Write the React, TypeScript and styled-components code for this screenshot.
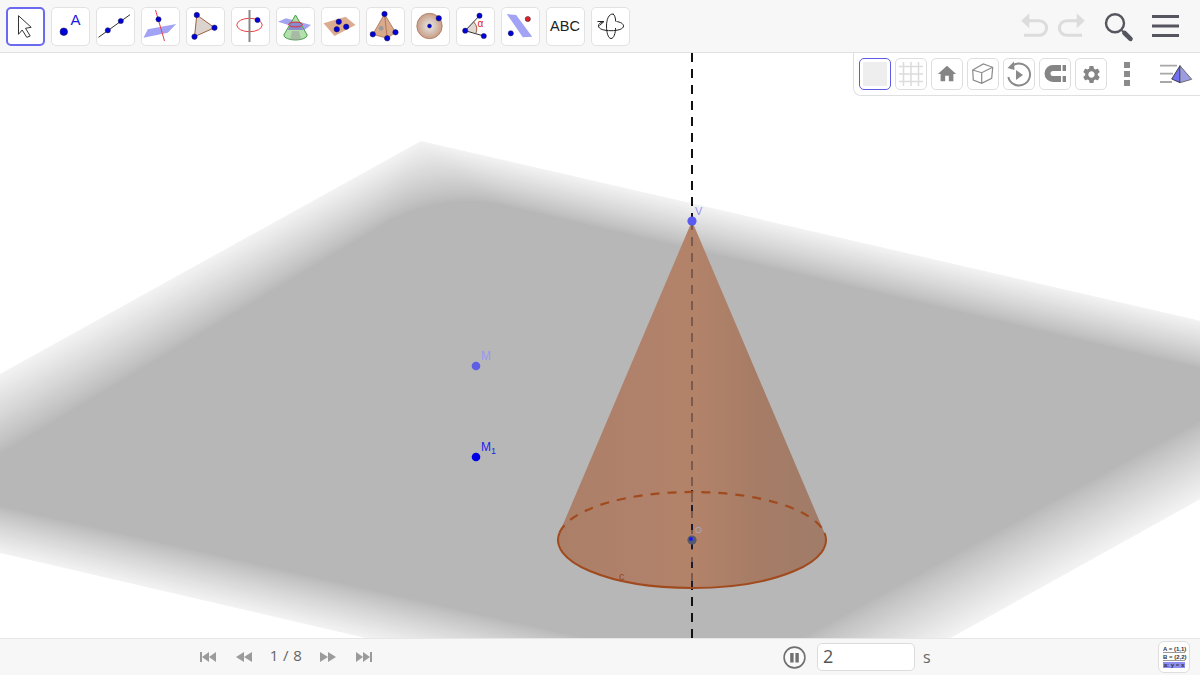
import React from "react";
import styled, { createGlobalStyle } from "styled-components";
import { MdHome, MdSettings } from "react-icons/md";

const GlobalStyle = createGlobalStyle`
  html, body { margin: 0; padding: 0; height: 100%; background: #fff; }
  #root { height: 100%; }
  * { box-sizing: border-box; }
`;

const Page = styled.div`
  width: 1200px;
  height: 675px;
  display: flex;
  flex-direction: column;
  overflow: hidden;
  font-family: "Open Sans", "Liberation Sans", sans-serif;
`;

const Toolbar = styled.header`
  height: 53px;
  flex: none;
  display: flex;
  align-items: flex-start;
  padding: 6.5px 19px 0 5.5px;
  background: #f7f7f7;
  border-bottom: 1px solid #e0e0e0;
`;

const ToolGroup = styled.div`
  display: flex;
  gap: 6px;
`;

const ToolButton = styled.div<{ $active?: boolean }>`
  width: 39px;
  height: 39px;
  display: flex;
  align-items: center;
  justify-content: center;
  background: #fff;
  border-radius: 5px;
  border: ${(p) => (p.$active ? "2px solid #6a6af0" : "1px solid #e2e2e2")};
  color: #222;
  font-family: "Liberation Sans", sans-serif;
  font-size: 14.5px;
`;

const Actions = styled.div`
  margin-left: auto;
  display: flex;
  gap: 15px;
  padding-top: 3.5px;
`;

const History = styled.div`
  display: flex;
  gap: 4px;
`;

const Glyph = styled.svg`
  width: 32px;
  height: 32px;
  flex: none;
  display: block;
  overflow: visible;
`;

const Canvas = styled.main`
  flex: 1;
  min-height: 0;
  position: relative;
  background: #fff;
`;

const Scene = styled.svg`
  width: 100%;
  height: 100%;
  display: block;
`;

const StyleBar = styled.div`
  position: absolute;
  top: 0;
  right: 0;
  height: 43px;
  width: 347px;
  display: flex;
  align-items: flex-start;
  padding: 5px 8px 0 5px;
  background: #fff;
  border-left: 1px solid #e0e0e0;
  border-bottom: 1px solid #e0e0e0;
  border-bottom-left-radius: 8px;
`;

const BarButtons = styled.div`
  display: flex;
  gap: 4px;
`;

const BarButton = styled.div<{ $active?: boolean }>`
  width: 32px;
  height: 32px;
  display: flex;
  align-items: center;
  justify-content: center;
  border-radius: 5px;
  border: 1px solid ${(p) => (p.$active ? "#5c5ce6" : "#dedede")};
  color: #858585;
  background: #fff;
`;

const Swatch = styled.span`
  width: 24px;
  height: 24px;
  background: #eeeeee;
  border-radius: 1px;
`;

const Dots = styled.div`
  width: 6px;
  margin: 4px 0 0 17px;
  display: flex;
  flex-direction: column;
  gap: 3px;
  span {
    display: block;
    height: 6px;
    background: #8b8b8b;
  }
`;

const StyleToggle = styled.div`
  margin-left: auto;
`;

const BottomBar = styled.footer`
  height: 37px;
  flex: none;
  display: flex;
  align-items: center;
  padding: 0 10px 0 200px;
  background: #f7f7f7;
  border-top: 1px solid #e6e6e6;
`;

const Player = styled.div`
  display: flex;
  align-items: center;
  gap: 20px;
`;

const Counter = styled.span`
  width: 28px;
  display: flex;
  justify-content: center;
  white-space: nowrap;
  position: relative;
  top: -2px;
  font-size: 15px;
  letter-spacing: 0.4px;
  color: #666;
`;

const Speed = styled.div`
  margin-left: 411px;
  display: flex;
  align-items: center;
`;

const SpeedInput = styled.div`
  width: 98px;
  height: 28px;
  margin-left: 11px;
  padding: 0 0 2px 5px;
  display: flex;
  align-items: center;
  background: #fff;
  border: 1px solid #dcdcdc;
  border-radius: 5px;
  font-size: 18px;
  color: #555;
`;

const Unit = styled.span`
  margin-left: 8px;
  font-size: 16px;
  color: #666;
`;

const TableButton = styled.div`
  margin-left: auto;
  width: 32px;
  height: 32px;
  padding: 4px;
  display: flex;
  flex-direction: column;
  justify-content: center;
  background: #fff;
  border: 1px solid #dedede;
  border-radius: 6px;
  font-family: "Liberation Sans", sans-serif;
  font-size: 6px;
  font-weight: 700;
  line-height: 7px;
  text-align: center;
  white-space: nowrap;
  color: #333;
`;

const TableRow = styled.span<{ $on?: boolean }>`
  display: block;
  background: ${(p) => (p.$on ? "#8f8ff2" : "transparent")};
  border-bottom: ${(p) => (p.$on ? "none" : "1px solid #999")};
  margin-bottom: 1px;
  line-height: 6px;
`;

type Pt = [number, number];

// plane corners, outer rim and where the fade reaches full grey
const outer: Pt[] = [[421, 141], [1427, 373], [778, 734], [-228, 500]];
const inner: Pt[] = [[440, 190], [1269, 384], [739, 673], [-65, 492]];
const BANDS = 30;
const ROUNDING = 70;

const towards = (a: Pt, b: Pt, dist: number): Pt => {
  const len = Math.hypot(b[0] - a[0], b[1] - a[1]);
  return [a[0] + ((b[0] - a[0]) / len) * dist, a[1] + ((b[1] - a[1]) / len) * dist];
};

const fmt = (p: Pt) => `${p[0].toFixed(1)} ${p[1].toFixed(1)}`;

const planeBands = Array.from({ length: BANDS + 1 }, (_, i) => {
  const t = i / BANDS;
  const quad = outer.map(
    (p, k): Pt => [p[0] + (inner[k][0] - p[0]) * t, p[1] + (inner[k][1] - p[1]) * t],
  );
  const cut = t * ROUNDING;
  const d = quad
    .map((p, k) => {
      const prev = quad[(k + 3) % 4];
      const next = quad[(k + 1) % 4];
      const from = towards(p, prev, cut);
      const to = towards(p, next, cut);
      return `${k === 0 ? "M" : "L"}${fmt(from)}Q${fmt(p)} ${fmt(to)}`;
    })
    .join("");
  const g = Math.round(183 + 59 * Math.pow(1 - t, 0.85));
  return { d: d + "Z", fill: `rgb(${g},${g},${g})` };
});

const Dot = ({ x, y, r = 3.1, fill = "#0000d8" }: { x: number; y: number; r?: number; fill?: string }) => (
  <circle cx={x} cy={y} r={r} fill={fill} stroke="#1c1c44" strokeWidth={0.5} />
);

const MoveIcon = () => (
  <Glyph viewBox="0 0 32 32">
    <path d="M9.5 5.7 22.2 17.3 16.5 18.3 21.2 26 17.8 27.3 13.2 20 9.5 24.3Z" fill="#fff" stroke="#333" strokeWidth={1} />
  </Glyph>
);

const PointIcon = () => (
  <Glyph viewBox="0 0 32 32">
    <text x={21.5} y={15} fontSize={15} fontFamily="Liberation Sans, sans-serif" textAnchor="middle" fill="#1a1ae0">A</text>
    <Dot x={9.8} y={21.7} r={3.8} />
  </Glyph>
);

const LineIcon = () => (
  <Glyph viewBox="0 0 32 32">
    <line x1={-0.5} y1={27.3} x2={31} y2={4.7} stroke="#333" strokeWidth={1} />
    <Dot x={8.8} y={20.3} r={2.6} />
    <Dot x={21.8} y={11} r={2.6} />
  </Glyph>
);

const PerpendicularIcon = () => (
  <Glyph viewBox="0 0 32 32">
    <path d="M-.5 27.7 3.8 19.3 32.2 14 23.8 22.7Z" fill="#a3a3f5" />
    <line x1={11.5} y1={0} x2={20.5} y2={31} stroke="#e8404a" strokeWidth={1} />
    <Dot x={14.5} y={9.3} r={2.6} />
  </Glyph>
);

const TriangleIcon = () => (
  <Glyph viewBox="0 0 32 32">
    <path d="M7.8 5 25.5 17.7 5.5 26.7Z" fill="#dcd3ce" stroke="#a0603f" strokeWidth={1} />
    <Dot x={7.8} y={5} r={2.7} />
    <Dot x={25.5} y={17.7} r={2.7} />
    <Dot x={5.5} y={26.7} r={2.7} />
  </Glyph>
);

const CircleAxisIcon = () => (
  <Glyph viewBox="0 0 32 32">
    <ellipse cx={15.5} cy={15} rx={12.7} ry={6.7} fill="none" stroke="#ee4040" strokeWidth={1} />
    <line x1={15.5} y1={0} x2={15.5} y2={32} stroke="#888" strokeWidth={2} />
    <Dot x={23.5} y={10} r={2.6} />
  </Glyph>
);

const IntersectIcon = () => (
  <Glyph viewBox="0 0 32 32">
    <path d="M-1 11.7 7 8.3 32 15 25.5 20Z" fill="#a3a3f0" />
    <path d="M16.5 5 28.2 25A11.7 5 0 0 1 4.8 25Z" fill="#a9d9a0" fillOpacity={0.85} stroke="#3f9f3f" strokeWidth={1} />
    <path d="M12 12H21L24 20H9Z" fill="#8a8ad0" />
    <path d="M13 21H20L22 30H11Z" fill="#9a9a9a" fillOpacity={0.55} />
    <ellipse cx={16.5} cy={14.5} rx={7} ry={2.4} fill="none" stroke="#e03030" strokeWidth={1} />
  </Glyph>
);

const PlanePointsIcon = () => (
  <Glyph viewBox="0 0 32 32">
    <path d="M-.5 13.3 21.5 6.7 31.5 15 10.5 26Z" fill="#dcab90" />
    <Dot x={14.8} y={11.7} r={2.7} />
    <Dot x={22.2} y={16.7} r={2.7} />
    <Dot x={12.8} y={19.3} r={2.7} />
  </Glyph>
);

const PyramidIcon = () => (
  <Glyph viewBox="0 0 32 32">
    <path d="M15.5 4 3.8 24.3 18.2 28.3 26.5 22.3Z" fill="#d9aa8c" stroke="#a0603f" strokeWidth={0.7} />
    <path d="M15.5 4 18.2 28.3" stroke="#a0603f" strokeWidth={0.7} />
    <circle cx={12.2} cy={18.3} r={2.4} fill="#999" />
    <Dot x={15.5} y={4} r={2.7} />
    <Dot x={3.8} y={24.3} r={2.7} />
    <Dot x={18.2} y={28.3} r={2.7} />
    <Dot x={26.5} y={22.3} r={2.7} />
  </Glyph>
);

const SphereIcon = () => (
  <Glyph viewBox="0 0 32 32">
    <defs>
      <radialGradient id="sphereFill">
        <stop offset="0" stopColor="#e8e8e8" />
        <stop offset="0.45" stopColor="#d8c8bd" />
        <stop offset="1" stopColor="#c99d84" />
      </radialGradient>
    </defs>
    <circle cx={15.5} cy={16} r={12.7} fill="url(#sphereFill)" stroke="#a87a60" strokeWidth={0.8} />
    <Dot x={15.5} y={16} r={2} />
    <Dot x={24.8} y={8.3} r={2.7} />
  </Glyph>
);

const AngleIcon = () => (
  <Glyph viewBox="0 0 32 32">
    <path d="M6.2 20.7 14.5 11.2A11 11 0 0 1 17 23.2Z" fill="#e0d8d4" />
    <path d="M20.5 5.7 6.2 20.7 24.8 26" fill="none" stroke="#333" strokeWidth={1} />
    <path d="M14.5 11.7A11 11 0 0 1 17 23.2" fill="none" stroke="#a0603f" strokeWidth={1} />
    <text x={21.5} y={17} fontSize={10} fontFamily="Liberation Sans, sans-serif" textAnchor="middle" fill="#e02020">α</text>
    <Dot x={6.2} y={20.7} r={2.6} />
    <Dot x={20.5} y={5.7} r={2.6} />
    <Dot x={24.8} y={26} r={2.6} />
  </Glyph>
);

const ParallelIcon = () => (
  <Glyph viewBox="0 0 32 32">
    <path d="M2.8 4 12.2 5 28.2 26.7 18.8 27.3Z" fill="#a3a3f5" />
    <Dot x={23.8} y={9} r={2.6} fill="#e02020" />
    <Dot x={6.8} y={23.3} r={2.6} />
  </Glyph>
);

const RotateIcon = () => (
  <Glyph viewBox="0 0 32 32">
    <g fill="none" stroke="#222" strokeWidth={1}>
      <path d="M19.5 4C14.5 3.5 12.5 10 12.5 16C12.5 22 14 28.5 17 28.5C20 28.5 21.5 23 21.5 18" />
      <path d="M19 4C20.8 5 21.5 8 21.7 11.5" />
      <path d="M9 11.8C6 12.5 4.5 14 4.5 16C4.5 19 10 20.7 17 20.7C24 20.7 29.5 19 29.5 16C29.5 13.5 26 12 22.5 11.5" />
      <path d="M3.5 11.5H10L5.5 15.5" />
    </g>
  </Glyph>
);

const UndoIcon = ({ flip }: { flip?: boolean }) => (
  <Glyph viewBox="0 0 32 32">
    <g transform={flip ? "translate(32,0) scale(-1,1)" : undefined}>
      <path d="M2.2 10.7 10.3 3.2V18.2Z" fill="#dcdcdc" />
      <path d="M10 10.7H20.3a7.2 7.2 0 0 1 0 14.6H5" fill="none" stroke="#dcdcdc" strokeWidth={3} />
    </g>
  </Glyph>
);

const SearchIcon = () => (
  <Glyph viewBox="0 0 32 32">
    <circle cx={13} cy={13.3} r={9} fill="none" stroke="#55555f" strokeWidth={2.4} />
    <line x1={20} y1={20.5} x2={22} y2={22.5} stroke="#55555f" strokeWidth={2} />
    <line x1={22.5} y1={23} x2={28.5} y2={28.8} stroke="#55555f" strokeWidth={4.6} strokeLinecap="round" />
  </Glyph>
);

const MenuIcon = () => (
  <Glyph viewBox="0 0 32 32">
    <rect x={3} y={5} width={27} height={3} fill="#55555f" />
    <rect x={3} y={14.5} width={27} height={3} fill="#55555f" />
    <rect x={3} y={24} width={27} height={3} fill="#55555f" />
  </Glyph>
);

const GridIcon = () => (
  <Glyph viewBox="0 0 32 32">
    <path d="M8.5 4V28M16 4V28M23.5 4V28M4 8.5H28M4 16H28M4 23.5H28" stroke="#dcdcdc" strokeWidth={1.5} />
  </Glyph>
);

const CubeIcon = () => (
  <Glyph viewBox="0 0 32 32">
    <path d="M5.7 12 16.3 6 25.7 9.3 24.7 20.3 14.7 25.3 6.3 22ZM5.7 12 14.7 14.7 25.7 9.3M14.7 14.7V25.3" fill="none" stroke="#8a8a8a" strokeWidth={1.2} />
  </Glyph>
);

const ReplayIcon = () => (
  <Glyph viewBox="0 0 32 32">
    <path d="M9 8A11 11 0 1 1 5.3 19" fill="none" stroke="#8a8a8a" strokeWidth={2} />
    <path d="M11 3.5 4.5 10 11.5 12Z" fill="#8a8a8a" />
    <path d="M13 12 20 17 13 22Z" fill="#8a8a8a" />
  </Glyph>
);

const MagnetIcon = () => (
  <Glyph viewBox="0 0 32 32">
    <path d="M27 10H14a5.5 5.5 0 0 0 0 11H27" fill="none" stroke="#858585" strokeWidth={6} />
    <rect x={22} y={6.5} width={1.6} height={7} fill="#fff" />
    <rect x={22} y={17.5} width={1.6} height={7} fill="#fff" />
  </Glyph>
);

const StyleBarIcon = () => (
  <Glyph viewBox="0 0 32 32">
    <path d="M0 7.7H17M0 15.7H13M0 24H12" stroke="#a8a8a8" strokeWidth={1.8} />
    <path d="M20 7.7 11.7 21 20 24.7Z" fill="#7070f0" stroke="#222" strokeWidth={0.8} />
    <path d="M20 7.7 20 24.7 31.7 21.3Z" fill="#9c9ce0" stroke="#555" strokeWidth={0.8} />
  </Glyph>
);

const SkipIcon = ({ back, end }: { back?: boolean; end?: boolean }) => (
  <svg width={16} height={12} viewBox="0 0 16 12" style={{ display: "block" }}>
    <g fill="#9b9b9b" transform={back ? undefined : "translate(16,0) scale(-1,1)"}>
      {end && <rect x={0} y={1} width={2} height={10} />}
      <path d={end ? "M2 6 9 1V11Z" : "M0 6 8 1V11Z"} />
      <path d={end ? "M9 6 16 1V11Z" : "M8 6 16 1V11Z"} />
    </g>
  </svg>
);

const PauseIcon = () => (
  <svg width={23} height={23} viewBox="0 0 23 23" style={{ display: "block" }}>
    <circle cx={11.5} cy={11.5} r={10.4} fill="#fafafa" stroke="#707070" strokeWidth={1.6} />
    <rect x={7.2} y={7} width={3.4} height={9.5} fill="#707070" />
    <rect x={12.4} y={7} width={3.4} height={9.5} fill="#707070" />
  </svg>
);

const tools = [
  MoveIcon, PointIcon, LineIcon, PerpendicularIcon, TriangleIcon, CircleAxisIcon, IntersectIcon,
  PlanePointsIcon, PyramidIcon, SphereIcon, AngleIcon, ParallelIcon,
];

const LabelFont = "Liberation Sans, sans-serif";

const SceneLabels = () => (
  <g fontFamily={LabelFont}>
    <text x={695} y={215} fontSize={11} fill="#9090f5">V</text>
    <text x={481} y={360} fontSize={12} fill="#9898f2">M</text>
    <text x={481} y={451} fontSize={12} fill="#2222ee">
      M<tspan fontSize={9} dy={3}>1</tspan>
    </text>
    <text x={695} y={533} fontSize={9} fill="#a8a8c0">O</text>
    <text x={619} y={580} fontSize={11} fill="#8f4a28">c</text>
  </g>
);

const ConeScene = () => (
  <Scene viewBox="0 53 1200 585" preserveAspectRatio="none">
    <defs>
      <linearGradient id="coneSide" gradientUnits="userSpaceOnUse" x1="558" y1="0" x2="826" y2="0">
        <stop offset="0" stopColor="#ab7f68" />
        <stop offset="0.3" stopColor="#b0816b" />
        <stop offset="0.5" stopColor="#b38369" />
        <stop offset="0.75" stopColor="#a67c66" />
        <stop offset="1" stopColor="#a07c69" />
      </linearGradient>
    </defs>
    {planeBands.map((b, i) => (
      <path key={i} d={b.d} fill={b.fill} />
    ))}
    <line x1={692} y1={53} x2={692} y2={638} stroke="#111" strokeWidth={2} strokeDasharray="9 7" />
    <path d="M692 221 824.5 532.8A134 48 0 1 1 559.5 532.8Z" fill="url(#coneSide)" />
    <line x1={692} y1={225} x2={692} y2={588} stroke="#3a2a30" strokeWidth={2} strokeDasharray="9 7" strokeDashoffset={4} opacity={0.45} />
    <line x1={692} y1={490} x2={692} y2={588} stroke="#1c1c30" strokeWidth={2} strokeDasharray="6 13" strokeDashoffset={4} />
    <path d="M559.5 532.8A134 48 0 0 1 824.5 532.8" fill="none" stroke="#a04a1e" strokeWidth={2.2} strokeDasharray="9 8" />
    <path d="M559.5 532.8A134 48 0 1 0 824.5 532.8" fill="none" stroke="#a04a1e" strokeWidth={2} />
    <circle cx={692} cy={221} r={4.6} fill="#5a5af0" />
    <circle cx={476} cy={366} r={4.3} fill="#5f5fe6" />
    <circle cx={476} cy={457} r={4.3} fill="#0000e6" />
    <circle cx={692} cy={540} r={4.6} fill="#555a6a" />
    <circle cx={691} cy={539} r={2} fill="#1a1af0" />
    <SceneLabels />
  </Scene>
);

export default function App() {
  return (
    <Page>
      <GlobalStyle />
      <Toolbar>
        <ToolGroup>
          {tools.map((Tool, i) => (
            <ToolButton key={i} $active={i === 0}>
              <Tool />
            </ToolButton>
          ))}
          <ToolButton>ABC</ToolButton>
          <ToolButton>
            <RotateIcon />
          </ToolButton>
        </ToolGroup>
        <Actions>
          <History>
            <UndoIcon />
            <UndoIcon flip />
          </History>
          <SearchIcon />
          <MenuIcon />
        </Actions>
      </Toolbar>
      <Canvas>
        <ConeScene />
        <StyleBar>
          <BarButtons>
            <BarButton $active>
              <Swatch />
            </BarButton>
            <BarButton>
              <GridIcon />
            </BarButton>
            <BarButton>
              <MdHome size={22} />
            </BarButton>
            <BarButton>
              <CubeIcon />
            </BarButton>
            <BarButton>
              <ReplayIcon />
            </BarButton>
            <BarButton>
              <MagnetIcon />
            </BarButton>
            <BarButton>
              <MdSettings size={21} />
            </BarButton>
          </BarButtons>
          <Dots>
            <span />
            <span />
            <span />
          </Dots>
          <StyleToggle>
            <StyleBarIcon />
          </StyleToggle>
        </StyleBar>
      </Canvas>
      <BottomBar>
        <Player>
          <SkipIcon back end />
          <SkipIcon back />
          <Counter>1 / 8</Counter>
          <SkipIcon />
          <SkipIcon end />
        </Player>
        <Speed>
          <PauseIcon />
          <SpeedInput>2</SpeedInput>
          <Unit>s</Unit>
        </Speed>
        <TableButton>
          <TableRow>A = (1,1)</TableRow>
          <TableRow>B = (2,2)</TableRow>
          <TableRow $on>a: y = x</TableRow>
        </TableButton>
      </BottomBar>
    </Page>
  );
}
